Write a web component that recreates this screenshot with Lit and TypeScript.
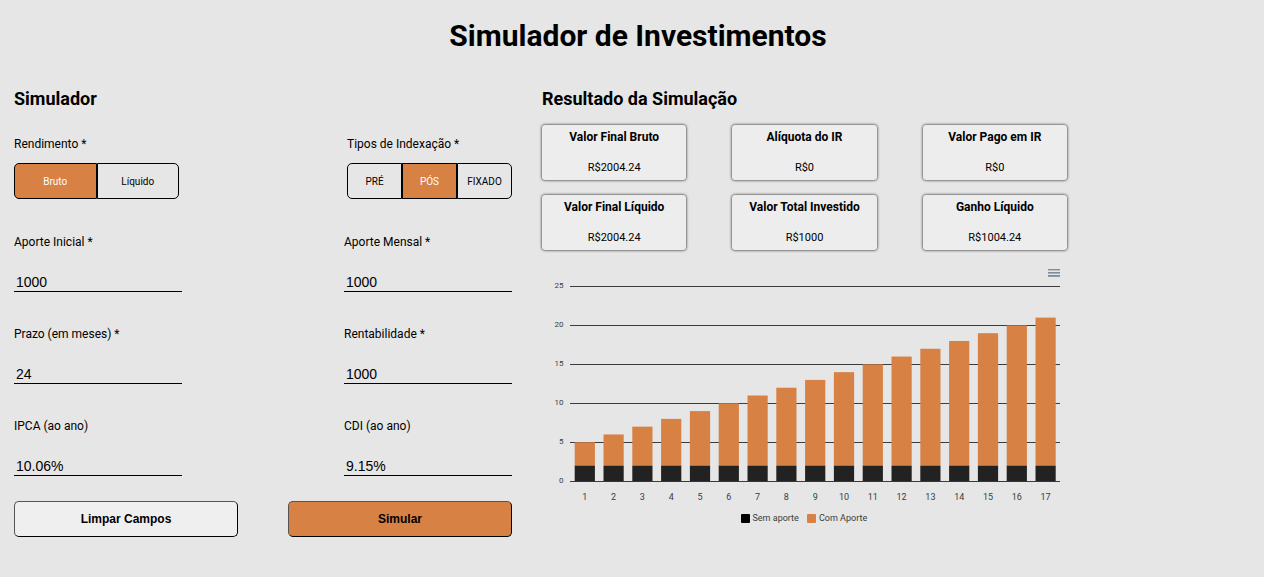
import { LitElement, html, svg, css } from "lit";
import { customElement, property, state } from "lit/decorators.js";
import { classMap } from "lit/directives/class-map.js";

interface Field {
  id: string;
  label: string;
  value: string;
}

const FIELDS: Field[] = [
  { id: "aporte-inicial", label: "Aporte Inicial *", value: "1000" },
  { id: "aporte-mensal", label: "Aporte Mensal *", value: "1000" },
  { id: "prazo", label: "Prazo (em meses) *", value: "24" },
  { id: "rentabilidade", label: "Rentabilidade *", value: "1000" },
  { id: "ipca", label: "IPCA (ao ano)", value: "10.06%" },
  { id: "cdi", label: "CDI (ao ano)", value: "9.15%" },
];

const RESULTS = [
  { label: "Valor Final Bruto", value: "R$2004.24" },
  { label: "Alíquota do IR", value: "R$0" },
  { label: "Valor Pago em IR", value: "R$0" },
  { label: "Valor Final Líquido", value: "R$2004.24" },
  { label: "Valor Total Investido", value: "R$1000" },
  { label: "Ganho Líquido", value: "R$1004.24" },
];

@customElement("toggle-group")
class ToggleGroup extends LitElement {
  @property({ attribute: false }) options: string[] = [];
  @property() label = "";
  @property({ type: Number }) selected = 0;

  static styles = css`
    :host {
      display: block;
    }
    .label {
      margin: 0 0 11px;
      font-size: 12px;
      line-height: 16px;
    }
    .group {
      display: grid;
      grid-auto-flow: column;
      grid-auto-columns: 1fr;
      height: 36px;
    }
    .option {
      min-width: 0;
      padding: 0;
      border: 1px solid #000;
      background: transparent;
      color: #000;
      font: 10px Roboto, sans-serif;
    }
    .option:first-child {
      border-radius: 5px 0 0 5px;
    }
    .option:last-child {
      border-radius: 0 5px 5px 0;
    }
    .active {
      background: #d78145;
      color: #fff;
    }
  `;

  render() {
    return html`
      <p class="label" id="label">${this.label}</p>
      <div class="group" role="group" aria-labelledby="label">
        ${this.options.map(
          (o, i) => html`<button
            type="button"
            class=${classMap({ option: true, active: i === this.selected })}
            aria-pressed=${i === this.selected}
            @click=${() => (this.selected = i)}
          >${o}</button>`
        )}
      </div>
    `;
  }
}

@customElement("stacked-chart")
class StackedChart extends LitElement {
  @state() base = 2;
  @state() totals = Array.from({ length: 17 }, (_, i) => i + 5);

  static styles = css`
    :host {
      display: block;
    }
    .chart {
      display: block;
      width: 100%;
      height: auto;
      font-family: Roboto, sans-serif;
    }
    .tick {
      font-size: 8px;
      fill: #373d3f;
      text-anchor: end;
    }
    .month {
      font-size: 9px;
      fill: #373d3f;
      text-anchor: middle;
    }
    .legend {
      font-size: 9px;
      fill: #373d3f;
    }
    .grid {
      stroke: #3c3c3f;
      stroke-width: 1;
    }
    .axis {
      stroke: #e0e0e0;
    }
    .orange {
      fill: #d78145;
    }
    .dark {
      fill: #222;
    }
    .black {
      fill: #000;
    }
    .menu {
      fill: #7b8c9d;
    }
  `;

  render() {
    const left = 28.4;
    const zero = 221.2;
    const unit = 7.79;
    const step = 28.8;
    const bar = 20.2;
    return html`
      <svg class="chart" viewBox="0 0 525 270" role="img" aria-label="Sem aporte e Com Aporte">
        <g class="menu">
          <rect x="506" y="9" width="12" height="1.4"></rect>
          <rect x="506" y="12" width="12" height="1.6"></rect>
          <rect x="506" y="15" width="12" height="1.8"></rect>
        </g>
        ${[25, 20, 15, 10, 5, 0].map((v) => {
          const y = Math.round(zero - v * unit) + 0.5;
          return svg`
            <line class="grid" x1="28" x2="518" y1=${y} y2=${y}></line>
            <text class="tick" x="21.5" y=${y + 1}>${v}</text>`;
        })}
        ${this.totals.map((t, i) => {
          const x = left + i * step + (step - bar) / 2;
          const split = zero - this.base * unit;
          return svg`
            <rect class="orange" x=${x} y=${zero - t * unit} width=${bar} height=${(t - this.base) * unit}></rect>
            <rect class="dark" x=${x} y=${split} width=${bar} height=${this.base * unit}></rect>
            <line class="axis" x1=${left + i * step} x2=${left + i * step} y1="222" y2="227"></line>
            <text class="month" x=${x + bar / 2} y="240">${i + 1}</text>`;
        })}
        <rect class="black" x="199" y="254" width="9" height="9" rx="1"></rect>
        <text class="legend" x="210.5" y="261">Sem aporte</text>
        <rect class="orange" x="265" y="254" width="9" height="9" rx="1"></rect>
        <text class="legend" x="277" y="261">Com Aporte</text>
      </svg>
    `;
  }
}

@customElement("app-root")
class AppRoot extends LitElement {
  static styles = css`
    :host {
      display: block;
      box-sizing: border-box;
      min-height: 100vh;
      padding: 16px 2px 24px 14px;
      background: #e6e6e6;
      color: #000;
      font-family: Roboto, sans-serif;
    }
    .title {
      margin: 0;
      font-size: 30px;
      line-height: 40px;
      text-align: center;
    }
    .page {
      display: grid;
      grid-template-columns: 498fr 525fr 165fr;
      column-gap: 30px;
      margin-top: 31px;
      align-items: start;
    }
    .heading {
      margin: 0;
      font-size: 18px;
      line-height: 24px;
    }
    .fields {
      display: grid;
      grid-template-columns: 168px 168px;
      justify-content: space-between;
      row-gap: 34px;
      margin-top: 35px;
    }
    .toggles {
      display: grid;
      grid-template-columns: 165px 165px;
      justify-content: space-between;
      margin-top: 25px;
    }
    .field-label {
      display: block;
      font-size: 12px;
      line-height: 16px;
    }
    .input {
      display: block;
      box-sizing: border-box;
      width: 100%;
      height: 20px;
      margin-top: 22px;
      padding: 0 2px;
      border: 0;
      border-bottom: 1px solid #000;
      outline: 0;
      background: transparent;
      color: #000;
      font: 14px "Liberation Sans", Arial, sans-serif;
    }
    .actions {
      display: grid;
      grid-template-columns: 1fr 1fr;
      column-gap: 50px;
      margin-top: 25px;
    }
    .action {
      height: 36px;
      padding: 0;
      border: 1px outset #000;
      border-radius: 5px;
      background: #efefef;
      color: #000;
      font: bold 12px "Liberation Sans", Arial, sans-serif;
    }
    .primary {
      background: #d78145;
    }
    .cards {
      display: grid;
      grid-template-columns: repeat(3, 1fr);
      gap: 15px 46px;
      margin-top: 14px;
    }
    .card {
      box-sizing: border-box;
      height: 55px;
      padding-top: 4px;
      border-radius: 3px;
      background: #ededed;
      box-shadow: 0 0 3px #000;
      text-align: center;
      font-size: 12px;
      line-height: 16px;
    }
    .card-title {
      margin: 0;
      font-size: 12px;
      font-weight: bold;
    }
    .card-value {
      margin: 15px 0 0;
      font-size: 11px;
    }
    .chart-box {
      margin-top: 10px;
    }
  `;

  render() {
    return html`
      <h1 class="title">Simulador de Investimentos</h1>
      <main class="page">
        <form @submit=${(e: Event) => e.preventDefault()}>
          <h2 class="heading">Simulador</h2>
          <div class="toggles">
            <toggle-group label="Rendimento *" .options=${["Bruto", "Líquido"]}></toggle-group>
            <toggle-group label="Tipos de Indexação *" .options=${["PRÉ", "PÓS", "FIXADO"]} .selected=${1}></toggle-group>
          </div>
          <div class="fields">
            ${FIELDS.map(
              (f) => html`<div>
                <label class="field-label" for=${f.id}>${f.label}</label>
                <input class="input" id=${f.id} type="text" .value=${f.value} />
              </div>`
            )}
          </div>
          <div class="actions">
            <button class="action" type="reset">Limpar Campos</button>
            <button class="action primary" type="submit">Simular</button>
          </div>
        </form>
        <section>
          <h2 class="heading">Resultado da Simulação</h2>
          <div class="cards">
            ${RESULTS.map(
              (r) => html`<article class="card">
                <h3 class="card-title">${r.label}</h3>
                <p class="card-value">${r.value}</p>
              </article>`
            )}
          </div>
          <div class="chart-box"><stacked-chart></stacked-chart></div>
        </section>
      </main>
    `;
  }
}
